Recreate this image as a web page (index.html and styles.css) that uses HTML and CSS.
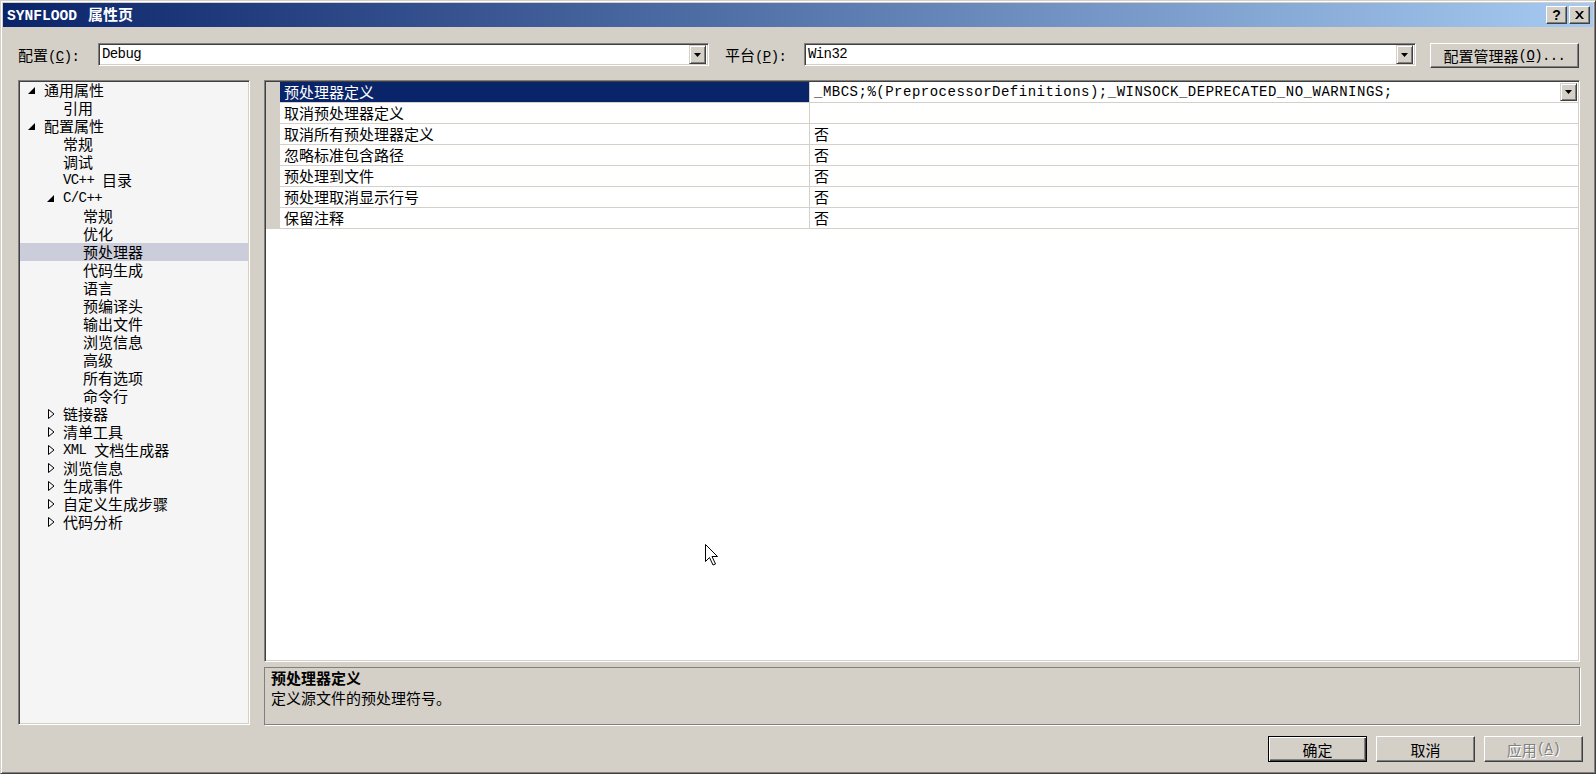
FILE: index.html
```html
<!DOCTYPE html>
<html lang="zh-CN">
<head>
<meta charset="utf-8">
<title>SYNFLOOD 属性页</title>
<link rel="stylesheet" href="styles.css">
</head>
<body>
<div class="window">
  <div class="titlebar">
    <span class="title"><span class="tm">SYNFLOOD</span><span class="tc">属性页</span></span>
    <div class="capbtns">
      <div class="cbtn help">?</div>
      <div class="cbtn close"><svg width="9" height="8" viewBox="0 0 9 8"><path d="M0 0h2.2l2.3 2.7 2.3-2.7h2.2l-3.4 4 3.4 4h-2.2l-2.3-2.7-2.3 2.7h-2.2l3.4-4z"/></svg></div>
    </div>
  </div>
  <div class="body">
    <div class="cfgrow">
      <div class="lbl lbl1">配置<span class="m">(<u>C</u>):</span></div>
      <div class="combo c1"><span class="m ctext">Debug</span><div class="dbtn"><svg width="7" height="4" viewBox="0 0 7 4"><path d="M0 0h7l-3.5 4z"/></svg></div></div>
      <div class="lbl lbl2">平台<span class="m">(<u>P</u>):</span></div>
      <div class="combo c2"><span class="m ctext">Win32</span><div class="dbtn"><svg width="7" height="4" viewBox="0 0 7 4"><path d="M0 0h7l-3.5 4z"/></svg></div></div>
      <div class="btn cfgmgr">配置管理器<span class="m">(<u>O</u>)...</span></div>
    </div>
    <div class="main">
      <div class="tree">
        <div class="trow l0"><span class="tog"><svg class="exp" width="9" height="9" viewBox="0 0 9 9"><path d="M8 1v7h-7z"/></svg></span>通用属性</div>
        <div class="trow l1"><span class="tog"></span>引用</div>
        <div class="trow l0"><span class="tog"><svg class="exp" width="9" height="9" viewBox="0 0 9 9"><path d="M8 1v7h-7z"/></svg></span>配置属性</div>
        <div class="trow l1"><span class="tog"></span>常规</div>
        <div class="trow l1"><span class="tog"></span>调试</div>
        <div class="trow l1"><span class="tog"></span><span class="m">VC++ </span>目录</div>
        <div class="trow l1"><span class="tog"><svg class="exp" width="9" height="9" viewBox="0 0 9 9"><path d="M8 1v7h-7z"/></svg></span><span class="m">C/C++</span></div>
        <div class="trow l2"><span class="tog"></span>常规</div>
        <div class="trow l2"><span class="tog"></span>优化</div>
        <div class="trow l2 sel"><span class="tog"></span>预处理器</div>
        <div class="trow l2"><span class="tog"></span>代码生成</div>
        <div class="trow l2"><span class="tog"></span>语言</div>
        <div class="trow l2"><span class="tog"></span>预编译头</div>
        <div class="trow l2"><span class="tog"></span>输出文件</div>
        <div class="trow l2"><span class="tog"></span>浏览信息</div>
        <div class="trow l2"><span class="tog"></span>高级</div>
        <div class="trow l2"><span class="tog"></span>所有选项</div>
        <div class="trow l2"><span class="tog"></span>命令行</div>
        <div class="trow l1"><span class="tog"><svg class="col" width="7" height="10" viewBox="0 0 7 10"><path d="M0.5 0.5L6 5L0.5 9.5z"/></svg></span>链接器</div>
        <div class="trow l1"><span class="tog"><svg class="col" width="7" height="10" viewBox="0 0 7 10"><path d="M0.5 0.5L6 5L0.5 9.5z"/></svg></span>清单工具</div>
        <div class="trow l1"><span class="tog"><svg class="col" width="7" height="10" viewBox="0 0 7 10"><path d="M0.5 0.5L6 5L0.5 9.5z"/></svg></span><span class="m">XML </span>文档生成器</div>
        <div class="trow l1"><span class="tog"><svg class="col" width="7" height="10" viewBox="0 0 7 10"><path d="M0.5 0.5L6 5L0.5 9.5z"/></svg></span>浏览信息</div>
        <div class="trow l1"><span class="tog"><svg class="col" width="7" height="10" viewBox="0 0 7 10"><path d="M0.5 0.5L6 5L0.5 9.5z"/></svg></span>生成事件</div>
        <div class="trow l1"><span class="tog"><svg class="col" width="7" height="10" viewBox="0 0 7 10"><path d="M0.5 0.5L6 5L0.5 9.5z"/></svg></span>自定义生成步骤</div>
        <div class="trow l1"><span class="tog"><svg class="col" width="7" height="10" viewBox="0 0 7 10"><path d="M0.5 0.5L6 5L0.5 9.5z"/></svg></span>代码分析</div>
      </div>
      <div class="right">
        <div class="props">
          <div class="prow psel"><div class="ph"></div><div class="pn">预处理器定义</div><div class="pv"><span class="v">_MBCS;%(PreprocessorDefinitions);_WINSOCK_DEPRECATED_NO_WARNINGS;</span><div class="dbtn pdb"><svg width="7" height="4" viewBox="0 0 7 4"><path d="M0 0h7l-3.5 4z"/></svg></div></div></div>
          <div class="prow"><div class="ph"></div><div class="pn">取消预处理器定义</div><div class="pv"></div></div>
          <div class="prow"><div class="ph"></div><div class="pn">取消所有预处理器定义</div><div class="pv">否</div></div>
          <div class="prow"><div class="ph"></div><div class="pn">忽略标准包含路径</div><div class="pv">否</div></div>
          <div class="prow"><div class="ph"></div><div class="pn">预处理到文件</div><div class="pv">否</div></div>
          <div class="prow"><div class="ph"></div><div class="pn">预处理取消显示行号</div><div class="pv">否</div></div>
          <div class="prow"><div class="ph"></div><div class="pn">保留注释</div><div class="pv">否</div></div>
        </div>
        <div class="desc">
          <div class="dtitle">预处理器定义</div>
          <div class="dtext">定义源文件的预处理符号。</div>
        </div>
      </div>
    </div>
    <div class="btnrow">
      <div class="btn bbtn default">确定</div>
      <div class="btn bbtn">取消</div>
      <div class="btn bbtn disabled">应用<span class="m">(<u>A</u>)</span></div>
    </div>
  </div>
  <svg class="cursor" width="13" height="22" viewBox="0 0 13 22"><path d="M0.5 0.5V17.5L4.5 13.5L8 21L10.5 20L7 12.5H12.5Z" fill="#fff" stroke="#000" stroke-width="1"/></svg>
</div>
</body>
</html>
```

FILE: styles.css
```css
* { box-sizing: border-box; margin: 0; padding: 0; }
html, body { width: 1596px; height: 774px; overflow: hidden; }
body {
  background: #d4d0c8;
  font-family: "Noto Sans CJK SC", "Liberation Sans", sans-serif;
  font-size: 15px;
  color: #000;
}
.m {
  font-family: "Liberation Mono", "Noto Sans CJK SC", monospace;
  font-size: 14px;
  letter-spacing: -0.6px;
  white-space: pre;
}

.window {
  position: relative;
  width: 1596px;
  height: 774px;
  display: flex;
  flex-direction: column;
  border: 1px solid;
  border-color: #d4d0c8 #404040 #404040 #d4d0c8;
  box-shadow: inset 1px 1px #fff, inset -1px -1px #808080;
  padding: 2px;
}

.titlebar {
  height: 24px;
  flex: none;
  display: flex;
  align-items: center;
  padding-left: 4px;
  padding-right: 3px;
  background: linear-gradient(to right, #0a246a, #a6caf0);
  color: #fff;
  font-weight: bold;
}
.title { line-height: 24px; white-space: nowrap; }
.tm { font-family: "Liberation Mono", monospace; font-size: 14.6px; font-weight: bold; }
.tc { margin-left: 11px; }
.capbtns { margin-left: auto; display: flex; gap: 2px; }
.cbtn {
  width: 21px; height: 18px;
  background: #d4d0c8;
  border: 1px solid;
  border-color: #fff #404040 #404040 #fff;
  box-shadow: inset -1px -1px #808080;
  color: #000;
  display: flex; align-items: center; justify-content: center;
}
.help { font-family: "Liberation Sans", sans-serif; font-weight: bold; font-size: 14px; line-height: 16px; }
.close svg { fill: #000; }

.body {
  flex: 1;
  display: flex;
  flex-direction: column;
  padding: 16px 10px 9px 15px;
}

.cfgrow {
  height: 25px;
  flex: none;
  display: flex;
  align-items: flex-start;
  padding-right: 4px;
}
.lbl { height: 23px; line-height: 23px; white-space: nowrap; flex: none; }
.lbl1 { width: 80px; }
.lbl2 { width: 79px; margin-left: 16px; }
.combo {
  height: 23px;
  flex: none;
  background: #fff;
  border: 1px solid;
  border-color: #808080 #fff #fff #808080;
  box-shadow: inset 1px 1px #404040, inset -1px -1px #d4d0c8;
  padding: 2px 2px 2px 3px;
  display: flex;
  align-items: center;
}
.c1 { width: 611px; }
.c2 { width: 612px; }
.ctext { line-height: 19px; }
.dbtn {
  margin-left: auto;
  width: 17px; height: 19px;
  flex: none;
  background: #d4d0c8;
  border: 1px solid;
  border-color: #d4d0c8 #404040 #404040 #d4d0c8;
  box-shadow: inset 1px 1px #fff, inset -1px -1px #808080;
  display: flex; align-items: center; justify-content: center;
}
.dbtn svg { fill: #000; }

.btn {
  background: #d4d0c8;
  border: 1px solid;
  border-color: #fff #404040 #404040 #fff;
  box-shadow: inset -1px -1px #808080;
  display: flex; align-items: center; justify-content: center;
  white-space: nowrap;
}
.cfgmgr { width: 149px; height: 25px; margin-left: 14px; flex: none; }

.main {
  flex: none;
  height: 645px;
  margin-top: 12px;
  margin-right: 3px;
  display: flex;
  gap: 14px;
}

.tree {
  width: 232px;
  flex: none;
  background: #f5f5f5;
  border: 1px solid;
  border-color: #808080 #fff #fff #808080;
  box-shadow: inset 1px 1px #404040, inset -1px -1px #d4d0c8;
  padding: 0 1px 1px 1px;
}
.trow {
  height: 18px;
  line-height: 18px;
  display: flex;
  align-items: center;
  white-space: nowrap;
}
.trow.sel { background: #cbcdda; }
.tog { width: 17px; flex: none; height: 18px; display: flex; align-items: center; }
.tog .exp { margin-left: 0; margin-top: 1px; fill: #000; }
.tog .col { margin-left: 2px; fill: none; stroke: #000; stroke-width: 1; }
.l0 { padding-left: 7px; }
.l1 { padding-left: 26px; }
.l2 { padding-left: 46px; }

.right {
  flex: 1;
  display: flex;
  flex-direction: column;
}
.props {
  height: 582px;
  flex: none;
  background: #fff;
  border: 1px solid;
  border-color: #808080 #fff #fff #808080;
  box-shadow: inset 1px 1px #404040, inset -1px -1px #d4d0c8;
  padding: 1px;
}
.prow { display: flex; height: 21px; }
.ph { width: 14px; flex: none; background: #d4d0c8; }
.pn {
  width: 530px;
  flex: none;
  border-right: 1px solid #d4d0c8;
  border-bottom: 1px solid #d4d0c8;
  padding-left: 4px;
  line-height: 20px;
  white-space: nowrap;
}
.pv {
  flex: 1;
  border-bottom: 1px solid #d4d0c8;
  padding-left: 4px;
  line-height: 20px;
  display: flex;
  align-items: center;
}
.psel .pn { background: #0a246a; color: #fff; }
.v {
  font-family: "Liberation Mono", monospace;
  font-size: 14px;
  letter-spacing: 0.5px;
  white-space: nowrap;
}
.pdb { height: 18px; margin-right: 1px; }

.desc {
  height: 58px;
  flex: none;
  margin-top: 5px;
  border: 1px solid #808080;
  box-shadow: 1px 1px 0 #fff;
  padding-left: 6px;
  line-height: 20px;
}
.dtitle { font-weight: bold; }

.btnrow {
  margin-top: 11px;
  height: 26px;
  flex: none;
  display: flex;
  justify-content: flex-end;
  gap: 9px;
}
.bbtn { width: 99px; height: 26px; }
.bbtn.default {
  border: 1px solid #000;
  box-shadow: inset 1px 1px #fff, inset -1px -1px #404040, inset -2px -2px #808080;
}
.bbtn.disabled { color: #808080; text-shadow: 1px 1px 0 #fff; }

.cursor { position: absolute; left: 704px; top: 543px; }
```
